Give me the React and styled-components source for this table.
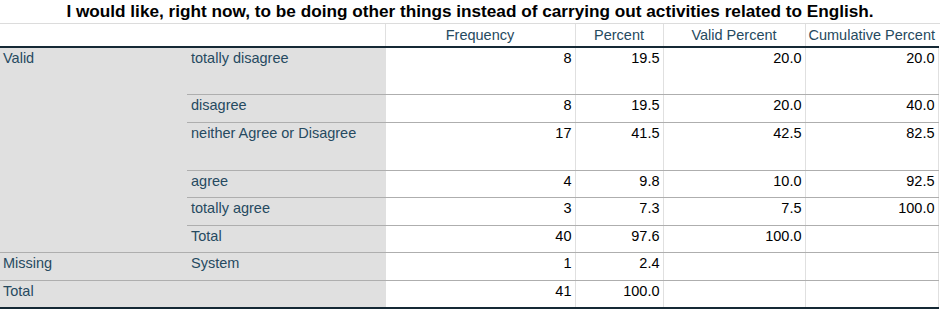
import React from 'react';
import styled, { createGlobalStyle } from 'styled-components';

const GlobalStyle = createGlobalStyle`
  body {
    margin: 0;
    background: #ffffff;
    font-family: "Liberation Sans", Arial, sans-serif;
  }
`;

const Wrap = styled.div`
  width: 940px;
`;

const Title = styled.div`
  height: 23px;
  border-bottom: 1px solid #dcdcdc;
  font-size: 17.2px;
  font-weight: bold;
  color: #000;
  text-align: center;
  line-height: 22px;
  white-space: nowrap;
`;

const Table = styled.table`
  border-collapse: collapse;
  table-layout: fixed;
  width: 938px;
  font-size: 14.5px;
`;

const HeadRow = styled.tr`
  height: 23px;
  border-bottom: 2px solid #152935;
`;

const Th = styled.th`
  font-weight: normal;
  color: #264a60;
  text-align: center;
  padding: 0 2px 3px;
  vertical-align: bottom;
  white-space: nowrap;
  border-left: ${p => (p.$first ? 'none' : '1px solid #e0e0e0')};
`;

const Row = styled.tr`
  height: ${p => p.$h}px;
`;

const Label = styled.td`
  background: #e0e0e0;
  color: #264a60;
  vertical-align: top;
  padding: 2px 4px 0 ${p => (p.$inner ? '4px' : '3px')};
  white-space: nowrap;
  border-bottom: ${p => (p.$end ? '2px solid #152935' : p.$line ? '1px solid #aeaeae' : 'none')};
`;

const Num = styled.td`
  color: #000;
  text-align: right;
  vertical-align: top;
  padding: 2px 3px 0 2px;
  border-left: 1px solid #e0e0e0;
  border-right: ${p => (p.$last ? '1px solid #e0e0e0' : 'none')};
  border-bottom: ${p => (p.$end ? '2px solid #152935' : '1px solid #aeaeae')};
`;

const validRows = [
  ['totally disagree', '8', '19.5', '20.0', '20.0', 47],
  ['disagree', '8', '19.5', '20.0', '40.0', 28],
  ['neither Agree or Disagree', '17', '41.5', '42.5', '82.5', 48],
  ['agree', '4', '9.8', '10.0', '92.5', 27],
  ['totally agree', '3', '7.3', '7.5', '100.0', 28],
  ['Total', '40', '97.6', '100.0', '', 27],
];

function App() {
  return (
    <Wrap>
      <GlobalStyle />
      <Title>I would like, right now, to be doing other things instead of carrying out activities related to English.</Title>
      <Table>
        <colgroup>
          <col style={{ width: 187 }} />
          <col style={{ width: 198 }} />
          <col style={{ width: 190 }} />
          <col style={{ width: 88 }} />
          <col style={{ width: 142 }} />
          <col style={{ width: 133 }} />
        </colgroup>
        <thead>
          <HeadRow>
            <Th $first colSpan={2}></Th>
            <Th>Frequency</Th>
            <Th>Percent</Th>
            <Th>Valid Percent</Th>
            <Th>Cumulative Percent</Th>
          </HeadRow>
        </thead>
        <tbody>
          {validRows.map((r, i) => (
            <Row key={r[0]} $h={r[5]}>
              {i === 0 && <Label rowSpan={6} $line>Valid</Label>}
              <Label $inner $line>{r[0]}</Label>
              <Num>{r[1]}</Num>
              <Num>{r[2]}</Num>
              <Num>{r[3]}</Num>
              <Num $last>{r[4]}</Num>
            </Row>
          ))}
          <Row $h={28}>
            <Label $line>Missing</Label>
            <Label $inner $line>System</Label>
            <Num>1</Num>
            <Num>2.4</Num>
            <Num></Num>
            <Num $last></Num>
          </Row>
          <Row $h={28}>
            <Label colSpan={2} $end>Total</Label>
            <Num $end>41</Num>
            <Num $end>100.0</Num>
            <Num $end></Num>
            <Num $end $last></Num>
          </Row>
        </tbody>
      </Table>
    </Wrap>
  );
}

export default App;
